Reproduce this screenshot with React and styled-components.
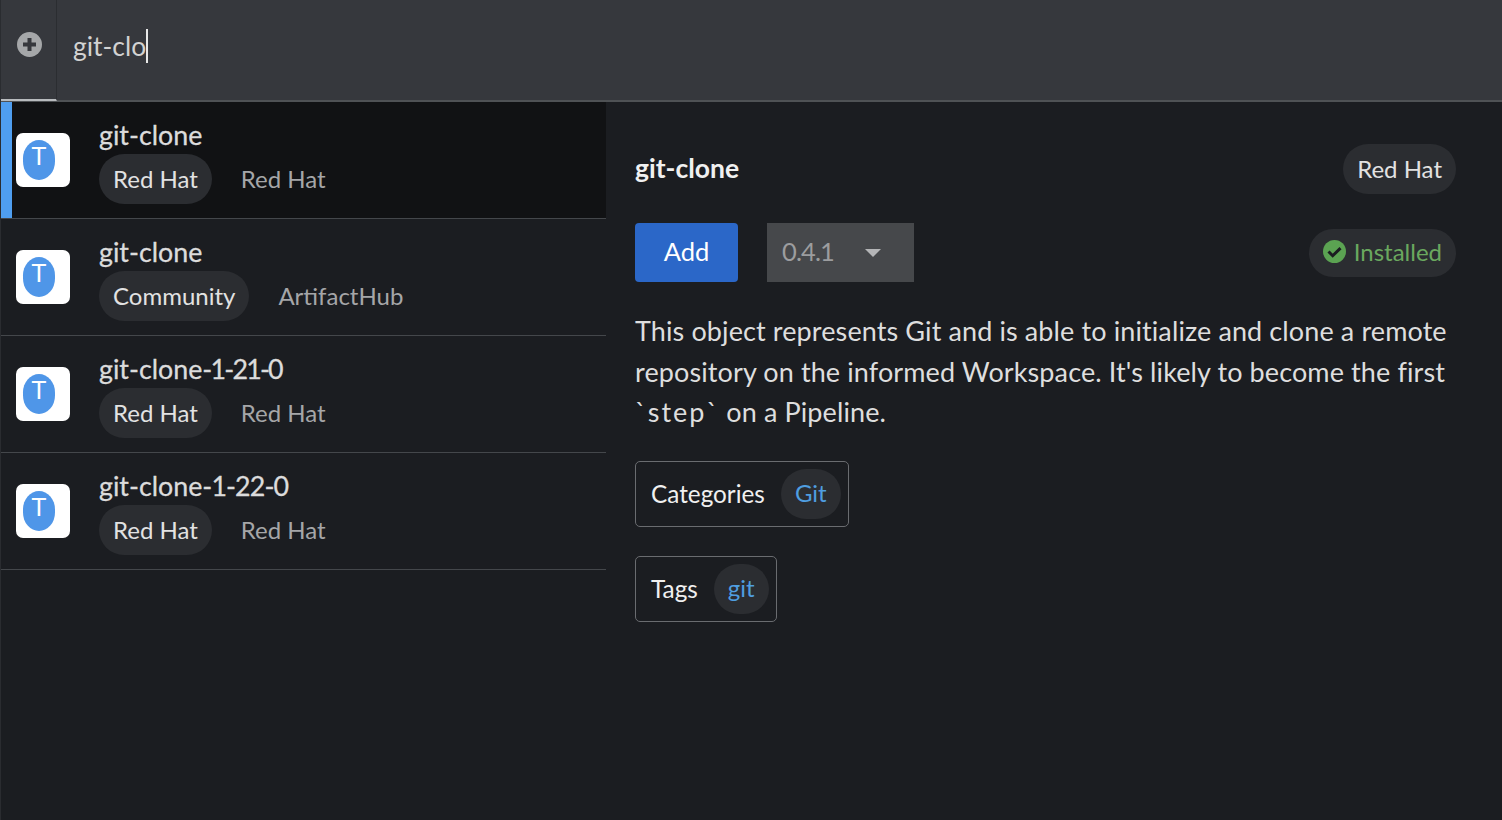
import React from "react";
import styled, { createGlobalStyle } from "styled-components";

const font = `"Lato", "Open Sans", "Liberation Sans", sans-serif`;

const Global = createGlobalStyle`
  html, body {
    margin: 0;
    padding: 0;
    height: 100%;
    background: #1b1d21;
  }
  * { box-sizing: border-box; }
  #root { height: 100vh; }
`;

const Page = styled.div`
  height: 820px;
  overflow: hidden;
  display: flex;
  flex-direction: column;
  background: #1b1d21;
  font-family: ${font};
  color: #e0e0e0;
  border-left: 1px solid #2a2c30;
`;
const SearchBar = styled.div`
  height: 102px;
  display: flex;
  background: #36383d;
  border-bottom: 2px solid #4f5255;
`;
const AddSlot = styled.div`
  width: 56px;
  display: flex;
  justify-content: center;
  padding: 32px 0 0 2px;
  border-right: 1px solid #2b2d31;
  border-bottom: 2px solid #b8bbbe;
  margin-bottom: -1px;
`;
const SearchText = styled.div`
  display: flex;
  align-items: flex-start;
  padding: 27px 0 0 16px;
  font-size: 26.4px;
  line-height: 38px;
  color: #d2d2d2;
`;
const Caret = styled.span`
  width: 2px;
  height: 34px;
  margin-top: 2px;
  background: #e8e8e8;
`;
const Body = styled.div`
  flex: 1;
  display: flex;
  min-height: 0;
`;
const List = styled.div`
  width: 605px;
  flex-shrink: 0;
`;
const Row = styled.div`
  height: 117px;
  display: flex;
  align-items: center;
  padding-left: 15px;
  border-bottom: 1px solid #44474b;
  background: ${(p) => (p.$selected ? "#111214" : "transparent")};
  box-shadow: ${(p) => (p.$selected ? "inset 11px 0 0 #4f9ef0" : "none")};
`;
const Logo = styled.div`
  width: 54px;
  height: 54px;
  flex-shrink: 0;
  border-radius: 7px;
  background: #fff;
  display: flex;
  align-items: flex-start;
  justify-content: center;
  padding: 7px 0 0 0;
  margin-right: 29px;
  margin-top: -1px;
`;
const Egg = styled.div`
  width: 32px;
  height: 40px;
  margin-right: 8px;
  border-radius: 50% / 46%;
  background: #4f96e8;
  color: #fff;
  font-size: 25px;
  line-height: 31px;
  text-align: center;
`;
const RowText = styled.div`
  display: flex;
  flex-direction: column;
  margin-top: 3px;
`;
const RowTitle = styled.div`
  font-size: 26.8px;
  line-height: 32px;
  height: 35px;
  color: #dcdcdc;
  -webkit-text-stroke: 0.3px #dcdcdc;
`;
const Version = styled.span`
  letter-spacing: ${(p) => p.$tight}px;
`;
const Meta = styled.div`
  display: flex;
  align-items: center;
  gap: 29px;
`;
const Chip = styled.span`
  display: inline-flex;
  align-items: center;
  height: 50px;
  padding: 0 14px 2px;
  border-radius: 25px;
  background: #2b2d31;
  font-size: 24px;
  color: ${(p) => p.$color || "#e2e2e2"};
`;
const Source = styled.span`
  font-size: 24px;
  color: #a5a6a8;
  margin-top: -2px;
`;
const Detail = styled.div`
  flex: 1;
  padding: 42px 46px 0 29px;
`;
const HeadRow = styled.div`
  display: flex;
  justify-content: space-between;
  align-items: center;
  height: 50px;
`;
const DetailTitle = styled.div`
  font-size: 26.5px;
  font-weight: 700;
  color: #f0f0f0;
  margin-top: -3px;
`;
const ActionRow = styled.div`
  display: flex;
  align-items: center;
  margin-top: 29px;
  height: 59px;
`;
const AddButton = styled.button`
  width: 103px;
  height: 59px;
  border: 0;
  border-radius: 4px;
  padding: 0 0 3px;
  background: #2b67c8;
  color: #fff;
  font-family: inherit;
  font-size: 25.5px;
`;
const VersionSelect = styled.div`
  width: 147px;
  height: 59px;
  margin-left: 29px;
  padding: 0 0 3px 15px;
  display: flex;
  align-items: center;
  background: #46484b;
  color: #9c9d9f;
  font-size: 25.5px;
  letter-spacing: -0.9px;
`;
const Arrow = styled.span`
  width: 0;
  height: 0;
  margin: 3px 0 0 31px;
  border-left: 8px solid transparent;
  border-right: 8px solid transparent;
  border-top: 8px solid #b4b5b7;
`;
const Installed = styled(Chip)`
  margin-left: auto;
  gap: 8px;
  height: 48px;
`;
const Description = styled.p`
  margin: 29px 0 0;
  font-size: 27px;
  letter-spacing: 0.11px;
  line-height: 40.5px;
  color: #dedede;
`;
const Code = styled.span`
  letter-spacing: 2px;
`;
const Group = styled.div`
  display: flex;
  width: fit-content;
  align-items: center;
  gap: 16px;
  height: 66px;
  margin-top: ${(p) => p.$gap}px;
  padding: 0 7px 0 15px;
  border: 1px solid #6a6c70;
  border-radius: 5px;
  font-size: 24.3px;
  color: #f0f0f0;
`;

const rows = [
  { name: "git-clone", chip: "Red Hat", source: "Red Hat", selected: true },
  { name: "git-clone", chip: "Community", source: "ArtifactHub" },
  { name: "git-clone", suffix: "-1-21-0", tight: -1.8, chip: "Red Hat", source: "Red Hat" },
  { name: "git-clone", suffix: "-1-22-0", tight: -0.9, chip: "Red Hat", source: "Red Hat" },
];

const PlusIcon = () => (
  <svg width="25" height="25" viewBox="0 0 25 25">
    <circle cx="12.5" cy="12.5" r="12.5" fill="#a5a7a9" />
    <path d="M12.5 6v13M6 12.5h13" stroke="#36383d" strokeWidth="4" />
  </svg>
);

const CheckIcon = () => (
  <svg width="23" height="23" viewBox="0 0 23 23">
    <circle cx="11.5" cy="11.5" r="11.5" fill="#5ba352" />
    <path d="M5.5 11.5l4.2 4.2 7.8-7.6" fill="none" stroke="#1b1d21" strokeWidth="3" />
  </svg>
);

export default function App() {
  return (
    <Page>
      <Global />
      <SearchBar>
        <AddSlot>
          <PlusIcon />
        </AddSlot>
        <SearchText>
          git-clo
          <Caret />
        </SearchText>
      </SearchBar>
      <Body>
        <List>
          {rows.map((r, i) => (
            <Row key={i} $selected={r.selected}>
              <Logo>
                <Egg>T</Egg>
              </Logo>
              <RowText>
                <RowTitle>
                  {r.name}
                  {r.suffix && <Version $tight={r.tight}>{r.suffix}</Version>}
                </RowTitle>
                <Meta>
                  <Chip>{r.chip}</Chip>
                  <Source>{r.source}</Source>
                </Meta>
              </RowText>
            </Row>
          ))}
        </List>
        <Detail>
          <HeadRow>
            <DetailTitle>git-clone</DetailTitle>
            <Chip>Red Hat</Chip>
          </HeadRow>
          <ActionRow>
            <AddButton>Add</AddButton>
            <VersionSelect>
              0.4.1
              <Arrow />
            </VersionSelect>
            <Installed $color="#6aa85f">
              <CheckIcon />
              Installed
            </Installed>
          </ActionRow>
          <Description>
            This object represents Git and is able to initialize and clone a remote repository on
            the informed Workspace. It's likely to become the first <Code>`step`</Code> on a
            Pipeline.
          </Description>
          <Group $gap={28}>
            Categories
            <Chip $color="#4f9ee0">Git</Chip>
          </Group>
          <Group $gap={29}>
            Tags
            <Chip $color="#4f9ee0">git</Chip>
          </Group>
        </Detail>
      </Body>
    </Page>
  );
}
